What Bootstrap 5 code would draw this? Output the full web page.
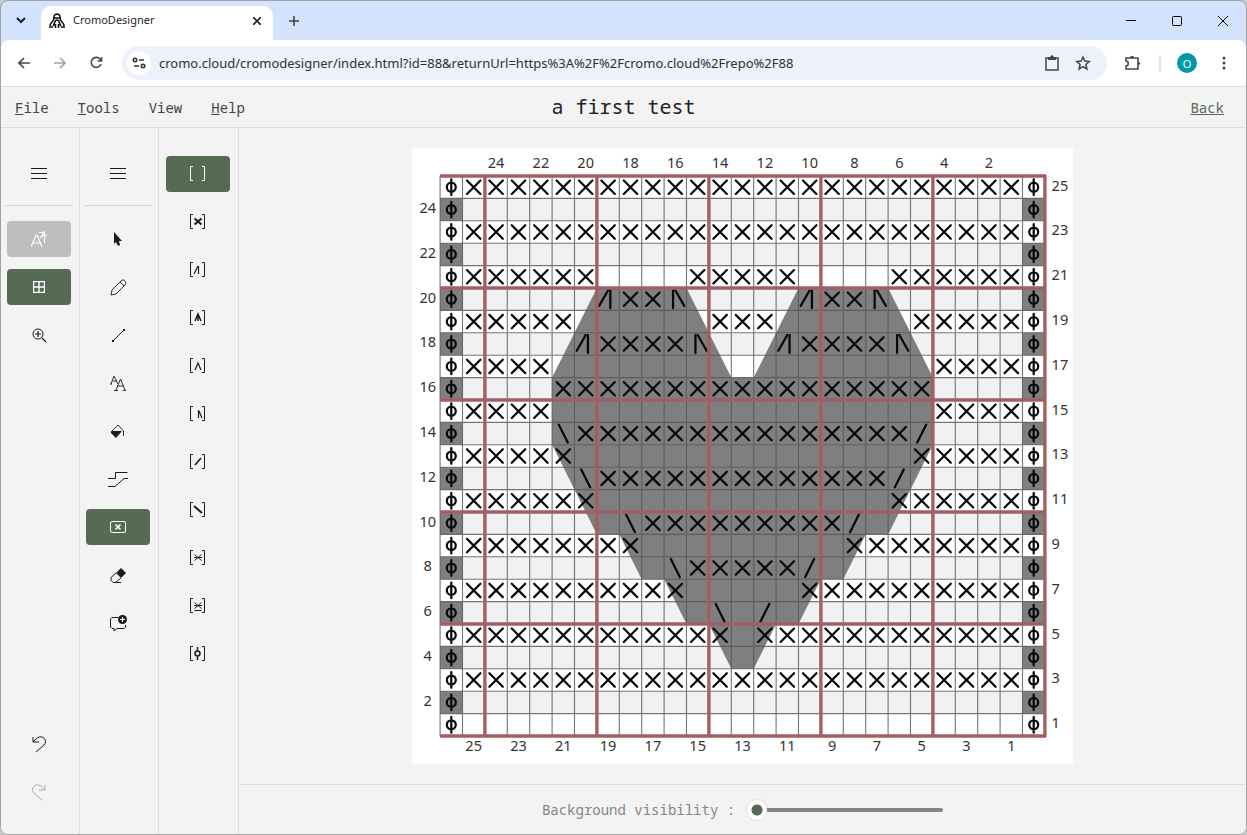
<!DOCTYPE html>
<html lang="en">
<head>
<meta charset="utf-8">
<meta name="viewport" content="width=device-width, initial-scale=1">
<title>CromoDesigner</title>
<link rel="stylesheet" href="https://cdn.jsdelivr.net/npm/bootstrap@5.3.0/dist/css/bootstrap.min.css">
<style>
:root { --panel: #f3f3f3; --rule: #dedede; --green: #566b54; --ink: #1b1b1b; --muted: #858585; }
body { height: 100vh; background: #c9c9c9; font-family: "Noto Sans Mono", "DejaVu Sans Mono", monospace; font-size: 14px; color: #3a3a3a; }
.browser { height: 100%; border: 1px solid #a2a2a2; border-radius: 8px; background: #d3e2fd; overflow: hidden; }
.browser-ui { font-family: "Noto Sans", "Open Sans", sans-serif; color: #1f1f1f; }
.tab-strip { height: 39px; padding-left: 6px; }
.tab-search { width: 28px; height: 28px; border-radius: 9px; background: #ebf2ff; }
.page-tab { width: 232px; height: 34px; border-radius: 10px 10px 0 0; background: #fff; font-size: 11px; margin: 5px 0 0 6px; padding: 0 8px 5px; }
.bare { background: none; border: 0; padding: 0; color: inherit; line-height: 1; display: inline-flex; align-items: center; justify-content: center; }
.win-btn { width: 46px; height: 38px; }
.nav-row { height: 47px; background: #fff; border-radius: 8px 8px 0 0; border-bottom: 1px solid var(--rule); padding: 0 13px 0 5px; }
.nav-icon { width: 36px; height: 34px; color: #474747; }
.address { height: 34px; border-radius: 17px; background: #ecf1fb; padding: 0 16px 0 5px; margin-left: 8px; }
.site-info { width: 24px; height: 24px; border-radius: 12px; background: #fff; }
.address input { font-size: 13px; line-height: 20px; color: #2e3036; border: 0; background: none; outline: 0; margin-left: 8px; padding: 0; }
.divider { width: 2px; height: 16px; background: #d3e2fd; }
.avatar { width: 20px; height: 20px; border-radius: 10px; background: #009aa6; color: #fff; font-size: 11px; }
.app { background: var(--panel); }
.menu-row { height: 41px; border-bottom: 1px solid var(--rule); }
.menu-row a { color: #444; text-decoration: none; }
.menus { gap: 29px; }
.menus a:first-child { margin-left: 14px; }
.menu-row .back { color: var(--green); text-decoration: underline; margin-right: 22px; }
.menu-row h1 { font-size: 20px; color: #222; }
.tool-col { width: 79px; border-right: 1px solid var(--rule); padding: 28px 6px 24px 4px; }
.tool-col hr { margin: 13px 0 15px; width: 100%; border-top: 1px solid #d4d4d4; opacity: 1; }
.stitch-col { width: 80px; }
.tool-stack { gap: 12px; }
.tool { width: 64px; height: 36px; border-radius: 4px; color: var(--ink); }
.tool.on { background: var(--green); color: #fff; }
.tool.off { background: #bebebe; color: #fff; }
.tool.dim { color: #aaa; }
.tool svg, .nav-icon svg { fill: none; stroke: currentColor; }
.work { padding: 20px; }
.sheet { background: #f4f4f4; }
.chart text { font-family: "Noto Sans", sans-serif; font-size: 13px; fill: #333; text-anchor: middle; }
.chart .side { text-anchor: start; }
.foot { height: 50px; border-top: 1px solid var(--rule); color: var(--muted); gap: 12px; }
.slider { appearance: none; width: 196px; height: 20px; background: none; margin: 0; }
.slider::-webkit-slider-runnable-track { height: 4px; border-radius: 2px; background: var(--muted); }
.slider::-webkit-slider-thumb { appearance: none; width: 20px; height: 20px; margin-top: -8px; border-radius: 10px; background: radial-gradient(circle, var(--green) 5px, #fff 6px); box-shadow: 0 0 2px #bbb; }
</style>
</head>
<body>
<div class="browser d-flex flex-column">
  <div class="browser-ui flex-shrink-0">
    <div class="tab-strip d-flex align-items-center">
      <button class="bare tab-search" aria-label="Search tabs"><svg width="10" height="7" fill="none" stroke="#0b1f4f" stroke-width="2"><path d="M1 1l4 4 4-4"/></svg></button>
      <div class="page-tab d-flex align-items-center">
        <svg width="16" height="16" viewBox="0 0 16 16" fill="none" stroke="#111" stroke-width="1.600"><path d="M5 4.500C4 0 12 0 11 4.500M4 5h8M5 5C5 9 1 9 1 13M11 5c0 4 4 4 4 8M8 7c-3 0-2 4-4 6M8 7c3 0 2 4 4 6M0 14h4M12 14h4M6.500 11v4M9.500 11v4"/></svg>
        <span class="flex-grow-1 ms-2">CromoDesigner</span>
        <button class="bare p-1" aria-label="Close tab"><svg width="8" height="8" stroke="#222" stroke-width="1.600"><path d="M0 0l8 8M8 0L0 8"/></svg></button>
      </div>
      <button class="bare ms-3" aria-label="New tab"><svg width="10" height="10" stroke="#444" stroke-width="1.600"><path d="M5 0v10M0 5h10"/></svg></button>
      <div class="ms-auto d-flex">
        <button class="bare win-btn" aria-label="Minimize"><svg width="10" height="10" stroke="#000"><path d="M0 4.500h10"/></svg></button>
        <button class="bare win-btn" aria-label="Maximize"><svg width="10" height="10" viewBox="0 0 20 20" fill="none" stroke="#000" stroke-width="2"><rect x="1" y="1" width="18" height="18" rx="2"/></svg></button>
        <button class="bare win-btn" aria-label="Close"><svg width="10" height="10" stroke="#000"><path d="M0 0l10 10M10 0L0 10"/></svg></button>
      </div>
    </div>
    <div class="nav-row d-flex align-items-center">
      <button class="bare nav-icon" aria-label="Back"><svg width="12" height="12" stroke-width="1.600"><path d="M12 6H1M6 1L1 6l5 5"/></svg></button>
      <button class="bare nav-icon" aria-label="Forward" disabled><svg width="12" height="12" stroke-width="1.600" opacity=".5"><path d="M0 6h11M6 1l5 5-5 5"/></svg></button>
      <button class="bare nav-icon" aria-label="Reload"><svg width="14" height="14" viewBox="0 0 14 14" stroke-width="1.600"><path d="M12 8a5 5 0 1 1-1-5l2 2M12.500 1v4H8.500"/></svg></button>
      <div class="address d-flex align-items-center flex-grow-1">
        <button class="bare site-info" aria-label="Site information"><svg width="14" height="12" viewBox="0 0 14 12" fill="none" stroke="#333" stroke-width="1.600"><circle cx="3" cy="3" r="1.700"/><path d="M7 3h5M2 9h5"/><circle cx="11" cy="9" r="1.700"/></svg></button>
        <input class="flex-grow-1" type="text" aria-label="Address" value="cromo.cloud/cromodesigner/index.html?id=88&amp;returnUrl=https%3A%2F%2Fcromo.cloud%2Frepo%2F88">
        <button class="bare ms-3" aria-label="Install"><svg width="14" height="16" viewBox="0 0 14 16" fill="none" stroke="#444" stroke-width="1.500"><path d="M1 3h12v12H1z"/><path d="M3 2h8v3H3z" fill="#444" stroke="none"/><circle cx="7" cy="2" r="1"/></svg></button>
        <button class="bare ms-3" aria-label="Bookmark"><svg width="16" height="16" viewBox="0 0 16 16" fill="none" stroke="#444" stroke-width="1.500"><path d="M8 2l1.800 4.100 4.400.4-3.300 3 1 4.400L8 11.600l-3.900 2.300 1-4.400-3.300-3 4.400-.4z"/></svg></button>
      </div>
      <button class="bare nav-icon ms-2" aria-label="Extensions"><svg width="16" height="16" viewBox="0 0 16 16" stroke-width="1.600"><path d="M1 3h12v11H1v-3c3 0 3-5 0-5z"/><path d="M5 3c0-3 4-3 4 0zM13 7c3 0 3 3 0 3z" fill="#474747" stroke="none"/></svg></button>
      <span class="divider mx-2"></span>
      <button class="bare avatar ms-2" aria-label="Profile">O</button>
      <button class="bare ms-3 me-1" aria-label="Menu"><svg width="16" height="14" fill="#444"><circle cx="11" cy="2" r="1.500"/><circle cx="11" cy="7" r="1.500"/><circle cx="11" cy="12" r="1.500"/></svg></button>
    </div>
  </div>

  <div class="app d-flex flex-column flex-grow-1 overflow-hidden">
    <header class="menu-row row g-0 align-items-center flex-shrink-0">
      <nav class="menus col d-flex"><a href="#"><u>F</u>ile</a><a href="#"><u>T</u>ools</a><a href="#">View</a><a href="#"><u>H</u>elp</a></nav>
      <h1 class="col-auto m-0 fw-normal">a first test</h1>
      <div class="col text-end"><a class="back" href="#">Back</a></div>
    </header>
    <div class="d-flex flex-grow-1 overflow-hidden">
      <aside class="tool-col d-flex flex-column align-items-center flex-shrink-0">
        <button class="bare tool" aria-label="Menu"><svg width="16" height="12"><path d="M0 .5h16M0 5.500h16M0 10.500h16"/></svg></button>
        <hr>
        <div class="tool-stack d-flex flex-column">
          <button class="bare tool off" aria-label="Text mode" disabled><svg width="16" height="17" viewBox="0 0 16 17"><path d="M0 16L5 4h1l5 12M2 12h7M8 1.500h4c1 3-1 4-3 5M13.500 0v12M13 4.500h3" stroke-width="1.200"/></svg></button>
          <button class="bare tool on" aria-label="Grid"><svg width="12" height="12"><path d="M.5.5h11v11H.5zM6 0v12M0 6h12" stroke-width="1.400"/></svg></button>
          <button class="bare tool" aria-label="Zoom in"><svg width="15" height="15"><circle cx="6" cy="6" r="5"/><path d="M10 10l4 4M6 3v6M3 6h6" stroke-width="1.200"/></svg></button>
        </div>
        <div class="tool-stack d-flex flex-column mt-auto">
          <button class="bare tool" aria-label="Undo"><svg width="14" height="17"><path d="M1 1v5h6M1 6l4-4c6-4 11 3 7 7l-8 7" /></svg></button>
          <button class="bare tool dim" aria-label="Redo" disabled><svg width="14" height="17"><path d="M13 1v5H7M13 6L9 2C3-2-2 5 2 9l8 7"/></svg></button>
        </div>
      </aside>
      <aside class="tool-col d-flex flex-column align-items-center flex-shrink-0">
        <button class="bare tool" aria-label="Drawing menu"><svg width="16" height="12"><path d="M0 .5h16M0 5.500h16M0 10.500h16"/></svg></button>
        <hr>
        <div class="tool-stack d-flex flex-column">
          <button class="bare tool" aria-label="Select"><svg width="8" height="15" viewBox="0 0 8 15"><path d="M0 0v12l2-2 2 4 2-1-1-4h3z" fill="currentColor" stroke="none"/></svg></button>
          <button class="bare tool" aria-label="Pencil"><svg width="17" height="17" viewBox="0 0 17 17"><path d="M1 16l1-5L11 2c3-3 6 1 4 4l-9 9zM10 3l4 4" stroke-width=".9"/></svg></button>
          <button class="bare tool" aria-label="Line"><svg width="13" height="13"><path d="M1 12L12 1"/><path d="M0 11h2v2H0zM11 0h2v2h-2z" fill="currentColor" stroke="none"/></svg></button>
          <button class="bare tool" aria-label="Text size"><svg width="16" height="16"><path d="M0 9h2M1 9L4 1l4 8M3 6h4M4 15.500h4M6 15L10.500 4 15 15M7 11h7M13 15.500h3" stroke-width=".9"/></svg></button>
          <button class="bare tool" aria-label="Fill"><svg width="14" height="13"><path d="M1 6l6-6 5.500 6v5" stroke-width=".9"/><path d="M0 6h11l-6 7-5-5z" fill="currentColor" stroke="none"/></svg></button>
          <button class="bare tool" aria-label="Path"><svg width="20" height="16"><path d="M0 7.500h7.500v-6h12M0 15.500h7l9-8h4"/></svg></button>
          <button class="bare tool on" aria-label="Stitch"><svg width="16" height="12"><rect x=".5" y=".5" width="15" height="11" rx="1.500"/><path d="M5.500 3.500l5 5M10.500 3.500l-5 5" stroke-width="1.600"/></svg></button>
          <button class="bare tool" aria-label="Eraser"><svg width="16" height="15"><path d="M6 5L1 9.500v3l2 2h8M6 14l5-4"/><path d="M11 0l5 5-5 5-5-5z" fill="currentColor" stroke="none"/></svg></button>
          <button class="bare tool" aria-label="Add comment"><svg width="17" height="17"><path d="M8 2.500H2l-1.500 1.500v8L2 13.500h2V16l3-2.500h7l1.500-1.500v-2"/><circle cx="12.500" cy="4.500" r="4.500" fill="currentColor" stroke="none"/><path d="M12.500 2v5M10 4.500h5" stroke="#fff" stroke-width="1.200"/></svg></button>
        </div>
      </aside>
      <aside class="tool-col stitch-col tool-stack d-flex flex-column align-items-center flex-shrink-0" id="stitches"></aside>
      <main class="d-flex flex-column flex-grow-1 overflow-hidden">
        <div class="work flex-grow-1 overflow-hidden">
          <div class="sheet h-100"><svg class="chart d-block w-100 h-100" id="chart" viewBox="0 0 590 550" role="img" aria-label="Stitch chart"></svg></div>
        </div>
        <div class="foot d-flex align-items-center justify-content-center flex-shrink-0">
          <label for="visibility">Background visibility :</label>
          <input class="slider" id="visibility" type="range" min="0" max="100" value="0">
        </div>
      </main>
    </div>
  </div>
</div>
<script src="https://cdn.jsdelivr.net/npm/bootstrap@5.3.0/dist/js/bootstrap.bundle.min.js"></script>
<script>
// Stitch palette: each glyph is drawn between square brackets
const palette = [
  ['Empty', ''],
  ['Cross', 'M4.500 4.500l7 6M11.500 4.500l-7 6', 2],
  ['Left decrease', 'M4 12l4-8M8.500 4v8', 1.2],
  ['Double decrease', 'M5 11l3-7 3 7M8 4v7', 1.5],
  ['Open decrease', 'M5 12l3-7 3 7', 1.2],
  ['Right decrease', 'M8.500 4v8M9 5l3 7', 1.2],
  ['Lean right', 'M5 11l6-7', 1.6],
  ['Lean left', 'M4 4l8 7', 2],
  ['Star', 'M4.500 4.500l7 6M11.500 4.500l-7 6M4 7.500h8', 1],
  ['Star bar', 'M4.500 4.500l7 6M11.500 4.500l-7 6M4 7.500h8M4.500 12.500h7', 1],
  ['Edge', 'M7.500 1v4M7.500 10v4M5 7.500a2.500 2.500 0 1 1 5 0a2.500 2.500 0 1 1-5 0', 1.5]
];
document.getElementById('stitches').innerHTML = palette.map(([name, d, w], i) =>
  `<button class="bare tool ${i ? '' : 'on'}" aria-label="${name}"><svg width="16" height="16"><path d="M3 .5H.5v14H3M12 .5h2.500v14H12"/><path d="${d}" stroke-width="${w || 1}"/></svg></button>`).join('');

// Rows 25 to 1, one character for each of the 25 stitches
const all = 'x'.repeat(25), none = ' '.repeat(25);
const rows = [
  all, none, all, none,
  'xxxxxx    xxxxx    xxxxxx',
  '      LxxR     LxxR      ',
  'xxxxx      xxx      xxxxx',
  '     LxxxxR   LxxxxR     ',
  'xxxx                 xxxx',
  '    xxxxxxxxxxxxxxxxx    ',
  'xxxx                 xxxx',
  '    bxxxxxxxxxxxxxxxs    ',
  'xxxxx               xxxxx',
  '     bxxxxxxxxxxxxxs     ',
  'xxxxxx             xxxxxx',
  '       bxxxxxxxxxs       ',
  'xxxxxxxx         xxxxxxxx',
  '         bxxxxxs         ',
  'xxxxxxxxxx     xxxxxxxxxx',
  '           b s           ',
  'xxxxxxxxxxxx xxxxxxxxxxxx',
  none, all, none, none
];
const shape = {
  x: 'M4 4l12 12M16 4L4 16', L: 'M2 16l8-14M12 2v16', R: 'M8 2v16M10 2l8 14',
  b: 'M6 2l8 16', s: 'M14 2L6 18', p: 'M10 3v14M6 10a4 4 0 1 1 8 0a4 4 0 1 1-8 0'
};
let out = '<rect width="590" height="550" fill="#fff"/><g transform="translate(25 25)">';
rows.forEach((r, i) => {
  if (i % 2) out += `<rect y="${i * 20}" width="540" height="20" fill="#f1f1f1"/><path d="M0 ${i * 20}h20v20H0zM520 ${i * 20}h20v20h-20z" fill="#7f7f7f"/>`;
});
out += '<path transform="scale(20)" fill="#7f7f7f" d="M7 5L5 9V12L7 16H8L9 18H10L11 20H12L13 22H14L15 20H16L17 18H18L19 16H20L22 12V9L20 5H16L14 9H13L11 5z"/>';
let grid = '', red = '';
for (let c = 0; c < 27; c++) grid += `M${c * 20} 0v500`;
for (let r = 0; r < 26; r++) grid += `M0 ${r * 20}h540`;
for (let c = 2; c < 28; c += 5) red += `M${c * 20} -1v502`;
for (let r = 0; r < 26; r += 5) red += `M0 ${r * 20}h541`;
out += `<path d="${grid}" stroke="#555" stroke-opacity=".8" fill="none"/>`;
rows.forEach((r, i) => [...('p' + r + 'p')].forEach((s, c) => {
  if (shape[s]) out += `<path transform="translate(${c * 20} ${i * 20})" d="${shape[s]}" fill="none" stroke="#080808" stroke-width="2" stroke-linecap="round"/>`;
}));
out += `<path d="${red}" stroke="#a35f5f" stroke-width="3" fill="none"/></g>`;
for (let n = 1; n < 26; n++) {
  const x = 555 - n * 20, y = 538 - n * 20;
  out += n % 2
    ? `<text x="${x}" y="538">${n}</text><text class="side" x="571" y="${y}">${n}</text>`
    : (`<text x="${x}" y="18">${n}</text><text x="14" y="${y}">${n}</text>`);
}
document.getElementById('chart').innerHTML = out;
</script>
</body>
</html>
